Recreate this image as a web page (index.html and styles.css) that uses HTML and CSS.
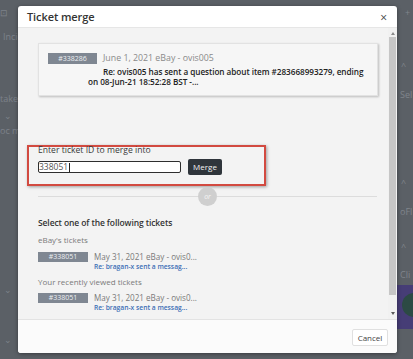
FILE: index.html
```html
<!DOCTYPE html>
<html>
<head>
<meta charset="utf-8">
<link rel="stylesheet" href="styles.css">
</head>
<body>
<div class="page">
  <div class="bg-left">
    <div class="bgi i1">⊡</div>
    <div class="bgi i2">Incid</div>
    <div class="bgi i3">take</div>
    <div class="bgi i4">⌄</div>
    <div class="bgi i5">oc m</div>
    <div class="bgi i6">⌄</div>
    <div class="bgi i7">⌄</div>
  </div>
  <div class="bg-right">
    <div class="bgi r1">+</div>
    <div class="bgi r2">^</div>
    <div class="bgi r3">Sel</div>
    <div class="bgi r4">^</div>
    <div class="bgi r5">oFl</div>
    <div class="bgi r6">^</div>
    <div class="bgi r7">Cli</div>
    <div class="purple"><span class="dot"></span></div>
  </div>

  <div class="modal">
    <div class="modal-header">
      <span class="title">Ticket merge</span>
      <span class="close">×</span>
    </div>
    <div class="modal-body">
      <div class="scroll">
        <div class="card">
          <div class="card-top">
            <span class="badge">#338286</span><span class="card-date">June 1, 2021 eBay - ovis005</span>
          </div>
          <div class="card-subject">Re: ovis005 has sent a question about item #283668993279, ending on 08-Jun-21 18:52:28 BST -...</div>
        </div>

        <div class="merge-box">
          <div class="merge-label">Enter ticket ID to merge into</div>
          <div class="merge-row">
            <div class="merge-input">338051<span class="caret"></span></div>
            <span class="merge-btn">Merge</span>
          </div>
        </div>

        <div class="divider">
          <span class="line"></span><span class="or">or</span><span class="line"></span>
        </div>

        <div class="select-title">Select one of the following tickets</div>
        <div class="group-title">eBay's tickets</div>
        <div class="ticket">
          <span class="badge">#338051</span>
          <div class="ticket-text">
            <div class="ticket-date">May 31, 2021 eBay - ovis0...</div>
            <div class="ticket-link">Re: bragan-x sent a messag...</div>
          </div>
        </div>
        <div class="group-title g2">Your recently viewed tickets</div>
        <div class="ticket t2">
          <span class="badge">#338051</span>
          <div class="ticket-text">
            <div class="ticket-date">May 31, 2021 eBay - ovis0...</div>
            <div class="ticket-link">Re: bragan-x sent a messag...</div>
          </div>
        </div>
      </div>
      <div class="scrollbar">
        <span class="arrow up"></span>
        <span class="thumb"></span>
        <span class="arrow down"></span>
      </div>
    </div>
    <div class="modal-footer">
      <span class="cancel">Cancel</span>
    </div>
  </div>
</div>
</body>
</html>
```

FILE: styles.css
```css
* { box-sizing: border-box; }
html, body { margin: 0; padding: 0; }
body {
  width: 413px;
  height: 359px;
  overflow: hidden;
  background: #5b6066;
  font-family: "Open Sans", "Noto Sans", sans-serif;
}
.page {
  position: relative;
  width: 413px;
  height: 359px;
  display: flex;
  justify-content: space-between;
}
.bg-left { width: 18px; color: #7d828a; font-size: 9px; line-height: 10px; }
.bg-right { width: 16px; color: #80858c; font-size: 9px; line-height: 10px; }
.bgi { white-space: nowrap; }
.i1 { margin-top: 8px; margin-left: 0; }
.i2 { margin-top: 14px; margin-left: 3px; }
.i3 { margin-top: 52px; }
.i4 { margin-top: 7px; margin-left: 4px; }
.i5 { margin-top: 5px; }
.i6 { margin-top: 149px; margin-left: 4px; }
.i7 { margin-top: 40px; margin-left: 4px; }
.r1 { margin-top: 8px; margin-left: 8px; }
.r2 { margin-top: 43px; margin-left: 4px; }
.r3 { margin-top: 19px; margin-left: 3px; }
.r4 { margin-top: 78px; margin-left: 4px; }
.r5 { margin-top: 19px; margin-left: 3px; }
.r6 { margin-top: 25px; margin-left: 4px; }
.r7 { margin-top: 18px; margin-left: 3px; }
.purple {
  margin-top: 5px;
  height: 44px;
  background: #463d76;
  position: relative;
  overflow: hidden;
}
.dot {
  position: absolute;
  left: 5px; top: 8px;
  width: 24px; height: 24px;
  border-radius: 50%;
  background: #2c4a44;
}

.modal {
  position: absolute;
  left: 18px;
  top: 6px;
  width: 379px;
  height: 347px;
  background: #fff;
  border-radius: 3px;
  overflow: hidden;
  display: flex;
  flex-direction: column;
  box-shadow: 0 1px 4px rgba(0,0,0,0.4);
}
.modal-header {
  height: 22px;
  flex: none;
  display: flex;
  align-items: center;
  justify-content: space-between;
  padding: 0 10px 0 9px;
  border-bottom: 1px solid #e6e6e6;
}
.title { font-size: 11px; color: #333; font-weight: 600; letter-spacing: -0.1px; }
.close { font-size: 12px; color: #444; line-height: 12px; margin-top: 2px; }
.modal-body {
  height: 291px;
  flex: none;
  background: #f3f3f3;
  display: flex;
}
.scroll {
  width: 370px;
  padding-top: 15px;
  overflow: hidden;
}
.scrollbar {
  width: 9px;
  background: #f1f1f1;
  display: flex;
  flex-direction: column;
  align-items: center;
}
.arrow { width: 0; height: 0; border-left: 2.5px solid transparent; border-right: 2.5px solid transparent; }
.arrow.up { border-bottom: 3px solid #8a8a8a; margin-top: 4px; }
.arrow.down { border-top: 3px solid #5a5a5a; margin-top: 17px; }
.thumb { width: 7px; height: 258px; background: #c6c6c6; margin-top: 2px; }

.card {
  margin-left: 20px;
  width: 340px;
  height: 53px;
  background: #f6f6f6;
  border: 1px solid #e2e2e2;
  box-shadow: 1px 1px 2px rgba(0,0,0,0.22);
  padding: 9px 2px 0 9px;
}
.card-top { display: flex; align-items: center; height: 11px; }
.badge {
  display: inline-block;
  flex: none;
  width: 49px;
  height: 11px;
  line-height: 11px;
  background: #7f8792;
  color: #eef0f3;
  font-size: 7px;
  text-align: center;
}
.card-date { margin-left: 6px; font-size: 8.8px; color: #8a8a8a; line-height: 11px; }
.card-subject {
  margin-top: 3px;
  margin-left: 40px;
  text-indent: 15px;
  font-size: 8.2px;
  letter-spacing: -0.05px;
  line-height: 10px;
  color: #222;
  font-weight: 600;
}

.merge-box {
  margin-top: 49px;
  margin-left: 9px;
  width: 239px;
  height: 41px;
  border: 2px solid #d24a40;
  box-shadow: 1px 1px 3px rgba(0,0,0,0.35);
  padding-left: 9px;
}
.merge-label {
  margin-top: -2px;
  font-size: 8.6px;
  line-height: 10px;
  color: #3a3a3a;
  white-space: nowrap;
}
.merge-row { display: flex; align-items: center; margin-top: 4px; gap: 7px; }
.merge-input {
  width: 143px;
  height: 12px;
  border: 1px solid #2e2e2e;
  border-radius: 2px;
  background: #fff;
  font-size: 8.5px;
  line-height: 10px;
  color: #555;
  padding-left: 0;
  display: flex;
  align-items: center;
}
.caret { width: 1px; height: 9px; background: #222; margin-left: 1px; }
.merge-btn {
  width: 34px;
  height: 16px;
  line-height: 16px;
  background: #2f353b;
  color: #f2f2f2;
  font-size: 8px;
  text-align: center;
  border-radius: 2px;
}

.divider {
  margin-top: 1px;
  margin-left: 20px;
  width: 339px;
  height: 19px;
  display: flex;
  align-items: center;
}
.line { flex: 1; height: 1px; background: #dcdcdc; }
.or {
  width: 19px; height: 19px;
  border-radius: 50%;
  background: #cfcfcf;
  color: #f5f5f5;
  font-size: 7px;
  font-style: italic;
  line-height: 19px;
  text-align: center;
}

.select-title {
  margin-top: 11px;
  margin-left: 20px;
  font-size: 8.5px;
  letter-spacing: -0.1px;
  line-height: 12px;
  font-weight: 600;
  color: #333;
}
.group-title {
  margin-top: 5px;
  margin-left: 20px;
  font-size: 8px;
  line-height: 11px;
  color: #7a7a7a;
}
.g2 { margin-top: 4px; }
.ticket { margin-top: 7px; margin-left: 20px; display: flex; }
.t2 { margin-top: 6px; }
.ticket .badge { width: 50px; height: 10px; line-height: 10px; }
.ticket-text { margin-left: 6px; }
.ticket-date { font-size: 8.1px; line-height: 10px; color: #7a7a7a; }
.ticket-link { font-size: 6.7px; line-height: 10px; color: #3b6eb5; font-weight: 600; }

.modal-footer {
  flex: 1;
  border-top: 1px solid #e3e3e3;
  background: #fbfbfb;
  display: flex;
  justify-content: flex-end;
  align-items: center;
  padding-right: 9px;
}
.cancel {
  width: 36px;
  height: 17px;
  line-height: 15px;
  border: 1px solid #e0e0e0;
  background: #fff;
  font-size: 8px;
  color: #444;
  text-align: center;
  border-radius: 2px;
  margin-top: 1px;
}
```
